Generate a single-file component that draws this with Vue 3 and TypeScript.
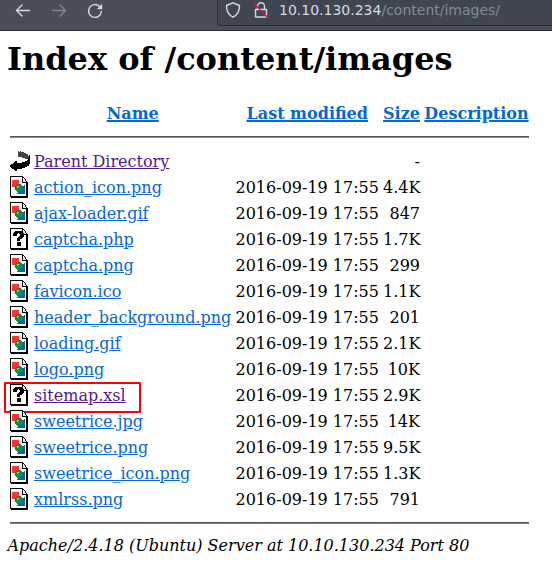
<script setup lang="ts">
interface Entry {
  name: string
  icon: 'back' | 'image' | 'unknown'
  date: string
  size: string
  visited?: boolean
  marked?: boolean
}

const stamp = '2016-09-19 17:55'
const image = (name: string, size: string): Entry => ({ name, icon: 'image', date: stamp, size })

const entries: Entry[] = [
  { name: 'Parent Directory', icon: 'back', date: '', size: '-', visited: true },
  image('action_icon.png', '4.4K'),
  image('ajax-loader.gif', '847'),
  { name: 'captcha.php', icon: 'unknown', date: stamp, size: '1.7K' },
  image('captcha.png', '299'),
  image('favicon.ico', '1.1K'),
  image('header_background.png', '201'),
  image('loading.gif', '2.1K'),
  image('logo.png', '10K'),
  { name: 'sitemap.xsl', icon: 'unknown', date: stamp, size: '2.9K', visited: true, marked: true },
  image('sweetrice.jpg', '14K'),
  image('sweetrice.png', '9.5K'),
  image('sweetrice_icon.png', '1.3K'),
  image('xmlrss.png', '791'),
]
</script>

<template>
  <div class="window">
    <header class="toolbar">
      <nav class="nav">
        <svg class="tool" viewBox="0 0 16 16"><path d="M14.500 7.500H1.500M7 2 1.500 7.500 7 13" /></svg>
        <svg class="tool dim" viewBox="0 0 16 16"><path d="M1.500 7.500h13M9 2l5.500 5.500L9 13" /></svg>
        <svg class="tool" viewBox="0 0 16 16">
          <path d="M12.500 3.500A6.400 6.400 0 1 0 14.300 8.500" />
          <path class="solid" d="M15.200 .8v5.400H9.800z" />
        </svg>
      </nav>
      <div class="address">
        <svg class="shield" viewBox="0 0 16 16"><path d="M8 .8 14.500 3.500C14.700 9 12.500 12.800 8 15.200 3.500 12.800 1.300 9 1.500 3.500z" /></svg>
        <svg class="lock" viewBox="0 0 16 16">
          <path d="M4.500 7V4.300a3.500 3.500 0 0 1 7 0V7M2.500 7.500h11v7.500h-11z" />
          <path class="slash" d="M1.500 2 14 15" />
        </svg>
        <span class="url">10.10.130.234<span class="path">/content/images/</span></span>
      </div>
    </header>
    <main class="page">
      <h1>Index of /content/images</h1>
      <div class="listing">
        <div class="row head">
          <span></span>
          <a>Name</a>
          <a>Last modified</a>
          <a>Size</a>
          <a>Description</a>
        </div>
        <div class="rule"></div>
        <div v-for="entry in entries" :key="entry.name" class="row" :class="{ marked: entry.marked }">
          <svg class="icon" viewBox="0 0 20 22" shape-rendering="crispEdges">
            <template v-if="entry.icon === 'back'">
              <path d="M8 1h1v1h1V1h1v1h3v1h2v1h2v2h1v3h-4V8h-3V7H8z" fill="#444" />
              <path d="M0 15h1v-1h2v-1h1v-1h1v-1h2v2h5v-1h3v-1h2v-1h1V8h1V5h1v9h-1v2h-2v1h-2v1h-3v1H7v2H5v-1H4v-1H2v-1H1v-1H0z" fill="#000" />
            </template>
            <template v-else>
              <path d="M0 0h13v1h1v1h1v1h1v2h1v1h1v16H1v-1H0z" fill="#000" />
              <path d="M1 1h11v6h4v13H1z" fill="#fff" />
              <path d="M13 2h1v1h1v2h1v1h-3z" fill="#eee" />
              <template v-if="entry.icon === 'image'">
                <path d="M2 4h7v7H2z" fill="#f33" />
                <path d="M15 9v9H7v-1h1v-1h1v-1h2v-1h1v-3h1v-1h1V9z" fill="#06b" />
                <path d="M7 8h4v1h1v1h1v4h-1v1h-1v1H7v-1H6v-1H5v-4h1V9h1z" fill="#464" />
                <path d="M7 9h4v1h1v4h-1v1H7v-1H6v-4h1z" fill="#093" />
                <path d="M7 10h2v1H8v1H7z" fill="#7d9" />
              </template>
              <path v-else d="M5 3h7v1h1v1h1v4h-1v1h-1v1h-2v2H7v-3h1V9h1V8h1V6H9V5H8v1H7v2H3V5h1V4h1zM7 14h4v4H7z" fill="#000" />
            </template>
          </svg>
          <span class="name"><a :class="{ visited: entry.visited }">{{ entry.name }}</a></span>
          <span class="date">{{ entry.date }}</span>
          <span class="size">{{ entry.size }}</span>
        </div>
        <div class="rule bottom"></div>
      </div>
      <address>Apache/2.4.18 (Ubuntu) Server at 10.10.130.234 Port 80</address>
    </main>
  </div>
</template>

<style>
body {
  margin: 0;
  background: #fff;
}
</style>

<style scoped>
.window {
  height: 573px;
  overflow: hidden;
  color: #000;
  font: 16px/24px 'DejaVu Serif', serif;
}
.toolbar {
  box-sizing: border-box;
  display: flex;
  height: 31px;
  background: #4a4d57;
  border-bottom: 1px solid #2b2a3a;
}
.nav {
  display: flex;
  gap: 20px;
  width: 202px;
  padding: 3px 0 0 15px;
}
svg {
  flex: none;
  fill: none;
  stroke: #d3dae3;
  stroke-width: 1.4;
  stroke-linejoin: round;
  stroke-linecap: round;
}
.tool,
.shield,
.lock {
  width: 16px;
  height: 16px;
}
.dim {
  opacity: 0.4;
}
.solid {
  fill: #d3dae3;
  stroke: none;
}
.address {
  box-sizing: border-box;
  display: flex;
  flex: 1;
  height: 26px;
  padding: 2px 0 0 7px;
  background: #404552;
  border: solid #2b2e39;
  border-width: 0 0 1px 1px;
  border-radius: 0 0 0 4px;
}
.lock {
  margin-left: 12px;
}
.slash {
  stroke: #e2103f;
}
.url {
  margin-left: 10px;
  color: #d3dae3;
  font: 14px/17px 'DejaVu Sans', sans-serif;
  white-space: nowrap;
}
.path {
  color: #868b96;
}
h1 {
  margin: 9px 0 0 7px;
  font-size: 32px;
  line-height: 38px;
  white-space: nowrap;
}
.listing {
  width: 519px;
  margin: 24px 0 0 10px;
}
.row {
  position: relative;
  display: grid;
  grid-template-columns: 20px 197.5px 143.5px 37px 105px;
  column-gap: 4px;
  height: 24px;
  margin-bottom: 2px;
  white-space: nowrap;
}
.head {
  font-weight: bold;
  text-align: center;
}
a {
  color: #0668d0;
  text-decoration: underline;
}
.head a {
  text-decoration-thickness: 2px;
}
.visited {
  color: #551a8b;
}
.size {
  text-align: right;
}
.icon {
  width: 20px;
  height: 22px;
  stroke: none;
}
.rule {
  height: 2px;
  margin: 10px 0 12px;
  background: linear-gradient(#555 50%, #888 50%);
}
.rule.bottom {
  margin: 10px 0 0;
}
.marked::after {
  position: absolute;
  top: -2px;
  left: -6px;
  box-sizing: border-box;
  width: 137px;
  height: 31px;
  border: 2px solid #f00;
  border-radius: 1px;
  content: '';
}
address {
  margin: 10px 0 0 7.5px;
  font-style: italic;
}
</style>
